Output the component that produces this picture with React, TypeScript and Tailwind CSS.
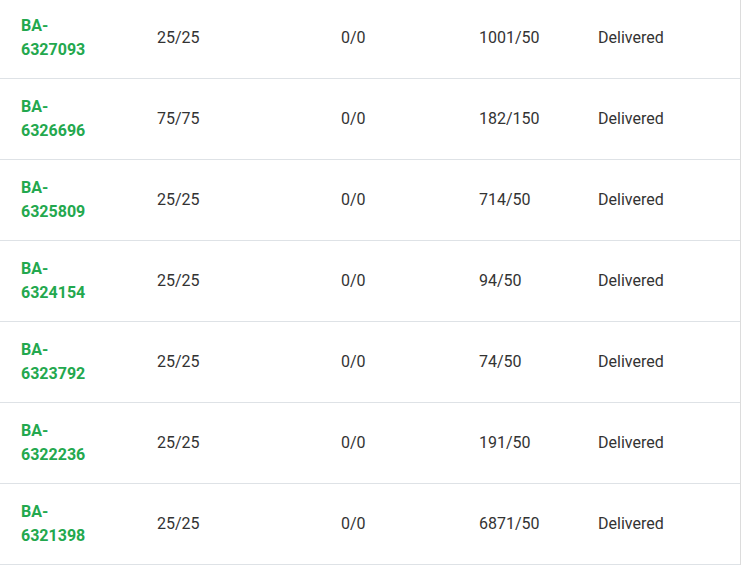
import React from "react";

const rows = [
  ["6327093", "25/25", "0/0", "1001/50", "Delivered"],
  ["6326696", "75/75", "0/0", "182/150", "Delivered"],
  ["6325809", "25/25", "0/0", "714/50", "Delivered"],
  ["6324154", "25/25", "0/0", "94/50", "Delivered"],
  ["6323792", "25/25", "0/0", "74/50", "Delivered"],
  ["6322236", "25/25", "0/0", "191/50", "Delivered"],
  ["6321398", "25/25", "0/0", "6871/50", "Delivered"],
];

export default function App() {
  return (
    <div
      className="w-[742px] h-[565px] overflow-hidden bg-white"
      style={{ fontFamily: "Roboto, 'Liberation Sans', sans-serif" }}
    >
      <div className="w-[741px] h-[565px] border-r border-[#dcdcdc] overflow-hidden">
        <div className="-mt-[2px]">
          {rows.map((r) => (
            <div
              key={r[0]}
              className="grid grid-cols-[137px_184px_138px_119px_1fr] h-[81px] border-b border-[#dee2e6] items-center text-[16px] leading-6 text-[#333333]"
            >
              <div className="pl-[21px] font-bold text-[#23a84e]">
                <div>BA-</div>
                <div>{r[0]}</div>
              </div>
              <div className="pl-5">{r[1]}</div>
              <div className="pl-5">{r[2]}</div>
              <div className="pl-5">{r[3]}</div>
              <div className="pl-5">{r[4]}</div>
            </div>
          ))}
        </div>
      </div>
    </div>
  );
}
